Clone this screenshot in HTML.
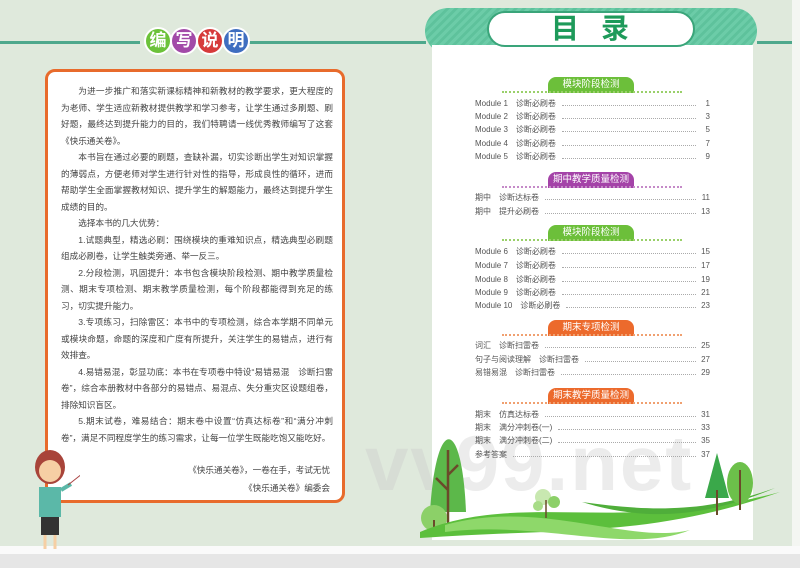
<!DOCTYPE html><html><head><meta charset="utf-8"><style>
*{margin:0;padding:0;box-sizing:border-box}
body{width:800px;height:568px;position:relative;overflow:hidden;background:#dfe9dc;font-family:"Liberation Sans","Noto Sans CJK SC",sans-serif}
.abs{position:absolute}
.line{position:absolute;top:41px;height:3px;background:#4ea88c}
.circ{position:absolute;top:27px;width:28px;height:28px;border-radius:50%;border:2px solid #fff;color:#fff;font-size:17px;text-align:center;line-height:24px;font-weight:bold}
.box{position:absolute;left:45px;top:69px;width:300px;height:434px;background:#fff;border:3px solid #e86b2c;border-radius:10px}
.txt{position:absolute;left:61px;top:83px;width:272px;font-size:8.65px;color:#444;line-height:16.5px;text-align:justify;letter-spacing:-0.03px}
.txt p{text-indent:2em}
.card{position:absolute;left:432px;top:45px;width:321px;height:495px;background:#fff}
.tab{position:absolute;left:425px;top:8px;width:332px;height:46px;border-radius:23px;background:repeating-linear-gradient(135deg,#6ccca8 0 3px,#5ec29c 3px 6px)}
.tabin{position:absolute;left:487px;top:11px;width:208px;height:36px;border-radius:18px;background:#fff;border:2px solid #3aa57a;color:#1e9a5a;font-size:28px;font-weight:bold;text-align:center;line-height:32px;letter-spacing:22px;padding-left:20px}
.sec{position:absolute;left:548px;width:86px;height:16px;border-radius:8px 8px 0 0;color:#fff;font-size:9.5px;text-align:center;line-height:16px}
.dl{position:absolute;left:502px;width:180px;border-top:2px dotted}
.row{position:absolute;left:475px;width:235px;font-size:8px;color:#555;display:flex;height:12px;line-height:12px}
.row .d{flex:1;border-bottom:1px dotted #aaa;margin:0 4px 4px 6px}
.row .n{width:10px;text-align:right}
</style></head><body>
<div class="line" style="left:0;width:140px"></div>
<div class="line" style="left:248px;width:178px"></div>
<div class="line" style="left:757px;width:35px"></div>
<div class="abs" style="left:792px;top:0;width:8px;height:548px;background:#f4f6f2"></div>
<div class="abs" style="left:0;top:546px;width:800px;height:8px;background:#fafafa"></div>
<div class="abs" style="left:0;top:554px;width:800px;height:14px;background:#e6e6e6"></div>
<div class="circ" style="left:144px;background:#6cc23a">编</div>
<div class="circ" style="left:170px;background:#a24aa8">写</div>
<div class="circ" style="left:196px;background:#d63a3a">说</div>
<div class="circ" style="left:222px;background:#3f6ec0">明</div>
<div class="box"></div>
<div class="txt">
<p>为进一步推广和落实新课标精神和新教材的教学要求，更大程度的为老师、学生适应新教材提供教学和学习参考，让学生通过多刷题、刷好题，最终达到提升能力的目的，我们特聘请一线优秀教师编写了这套《快乐通关卷》。</p>
<p>本书旨在通过必要的刷题，查缺补漏，切实诊断出学生对知识掌握的薄弱点，方便老师对学生进行针对性的指导，形成良性的循环，进而帮助学生全面掌握教材知识、提升学生的解题能力，最终达到提升学生成绩的目的。</p>
<p>选择本书的几大优势：</p>
<p>1.试题典型，精选必刷：围绕模块的重难知识点，精选典型必刷题组成必刷卷，让学生触类旁通、举一反三。</p>
<p>2.分段检测，巩固提升：本书包含模块阶段检测、期中教学质量检测、期末专项检测、期末教学质量检测，每个阶段都能得到充足的练习，切实提升能力。</p>
<p>3.专项练习，扫除雷区：本书中的专项检测，综合本学期不同单元或模块命题，命题的深度和广度有所提升，关注学生的易错点，进行有效排查。</p>
<p>4.易错易混，彰显功底：本书在专项卷中特设“易错易混　诊断扫雷卷”，综合本册教材中各部分的易错点、易混点、失分重灾区设题组卷，排除知识盲区。</p>
<p>5.期末试卷，难易结合：期末卷中设置“仿真达标卷”和“满分冲刺卷”，满足不同程度学生的练习需求，让每一位学生既能吃饱又能吃好。</p>
<div style="text-align:right;margin-top:15px;padding-right:3px;line-height:18px">《快乐通关卷》，一卷在手，考试无忧<br>《快乐通关卷》编委会</div>
</div>
<svg class="abs" style="left:30px;top:445px" width="50" height="110">
<ellipse cx="20" cy="22" rx="15" ry="17" fill="#a8443a"/>
<circle cx="20" cy="26" r="11" fill="#f6cfa4"/>
<path d="M9 42 h22 v30 h-22z" fill="#5bb8a8"/>
<path d="M11 72 h18 v18 h-18z" fill="#333"/>
<path d="M15 90 v14 M25 90 v14" stroke="#f6cfa4" stroke-width="3"/>
<path d="M31 45 l10 -6" stroke="#5bb8a8" stroke-width="4"/>
<path d="M38 40 l38 -30" stroke="#a44" stroke-width="1"/>
</svg>
<div class="tab"></div>
<div class="card"></div>
<div class="abs" style="left:365px;top:418px;font-size:78px;font-weight:bold;color:rgba(200,200,200,.35);letter-spacing:2px">vv99.net</div>
<div class="tabin">目录</div>

<div class="sec" style="top:77px;background:#6cbf3a">模块阶段检测</div><div class="dl" style="top:91px;border-color:#9ad06a"></div>
<div class="row" style="top:98px"><span>Module 1　诊断必刷卷</span><span class="d"></span><span class="n">1</span></div>
<div class="row" style="top:111px"><span>Module 2　诊断必刷卷</span><span class="d"></span><span class="n">3</span></div>
<div class="row" style="top:124px"><span>Module 3　诊断必刷卷</span><span class="d"></span><span class="n">5</span></div>
<div class="row" style="top:138px"><span>Module 4　诊断必刷卷</span><span class="d"></span><span class="n">7</span></div>
<div class="row" style="top:151px"><span>Module 5　诊断必刷卷</span><span class="d"></span><span class="n">9</span></div>
<div class="sec" style="top:172px;background:#a443a8">期中教学质量检测</div><div class="dl" style="top:186px;border-color:#c58ac8"></div>
<div class="row" style="top:192px"><span>期中　诊断达标卷</span><span class="d"></span><span class="n">11</span></div>
<div class="row" style="top:206px"><span>期中　提升必刷卷</span><span class="d"></span><span class="n">13</span></div>
<div class="sec" style="top:225px;background:#6cbf3a">模块阶段检测</div><div class="dl" style="top:239px;border-color:#9ad06a"></div>
<div class="row" style="top:246px"><span>Module 6　诊断必刷卷</span><span class="d"></span><span class="n">15</span></div>
<div class="row" style="top:260px"><span>Module 7　诊断必刷卷</span><span class="d"></span><span class="n">17</span></div>
<div class="row" style="top:274px"><span>Module 8　诊断必刷卷</span><span class="d"></span><span class="n">19</span></div>
<div class="row" style="top:287px"><span>Module 9　诊断必刷卷</span><span class="d"></span><span class="n">21</span></div>
<div class="row" style="top:300px"><span>Module 10　诊断必刷卷</span><span class="d"></span><span class="n">23</span></div>
<div class="sec" style="top:320px;background:#ec6a2c">期末专项检测</div><div class="dl" style="top:334px;border-color:#f0a070"></div>
<div class="row" style="top:340px"><span>词汇　诊断扫雷卷</span><span class="d"></span><span class="n">25</span></div>
<div class="row" style="top:354px"><span>句子与阅读理解　诊断扫雷卷</span><span class="d"></span><span class="n">27</span></div>
<div class="row" style="top:367px"><span>易错易混　诊断扫雷卷</span><span class="d"></span><span class="n">29</span></div>
<div class="sec" style="top:388px;background:#ec6a2c">期末教学质量检测</div><div class="dl" style="top:402px;border-color:#f0a070"></div>
<div class="row" style="top:409px"><span>期末　仿真达标卷</span><span class="d"></span><span class="n">31</span></div>
<div class="row" style="top:422px"><span>期末　满分冲刺卷(一)</span><span class="d"></span><span class="n">33</span></div>
<div class="row" style="top:435px"><span>期末　满分冲刺卷(二)</span><span class="d"></span><span class="n">35</span></div>
<div class="row" style="top:449px"><span>参考答案</span><span class="d"></span><span class="n">37</span></div>
<svg class="abs" style="left:400px;top:420px" width="400" height="130">
<path d="M30 92 C36 -5 62 -5 66 92Z" fill="#5cb84a"/>
<path d="M48 30 v80 M48 70 l-12 -12 M48 55 l10 -10" stroke="#6b4a2a" stroke-width="2.5" fill="none"/>
<circle cx="34" cy="98" r="13" fill="#8cd068"/>
<path d="M34 100 v12" stroke="#6b4a2a" stroke-width="2"/>
<path d="M20 112 C120 70 220 115 380 72 C250 118 160 108 20 118Z" fill="#5cbf3c"/>
<path d="M45 105 C140 78 230 125 290 110 C230 135 140 100 45 112Z" fill="#8ed86a"/>
<path d="M182 82 C240 90 300 95 375 68 C300 100 240 100 182 82Z" fill="#4fae3a"/>
<path d="M305 78 l12 -45 l12 45z" fill="#3aa84a"/>
<path d="M317 70 v25" stroke="#6b4a2a" stroke-width="2"/>
<ellipse cx="340" cy="63" rx="13" ry="21" fill="#6cc04a"/>
<path d="M340 50 v40" stroke="#6b4a2a" stroke-width="2"/>
<circle cx="143" cy="77" r="8" fill="#c8e8b0"/>
<circle cx="154" cy="82" r="6" fill="#8cd068"/>
<circle cx="138" cy="86" r="5" fill="#a8dc88"/>
<path d="M146 80 v18" stroke="#6b4a2a" stroke-width="1.5"/>
</svg>
</body></html>
